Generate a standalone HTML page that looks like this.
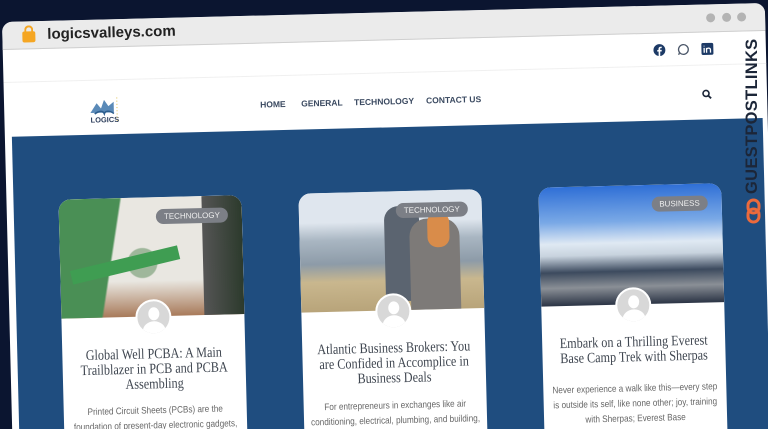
<!DOCTYPE html>
<html><head><meta charset="utf-8">
<style>
*{margin:0;padding:0;box-sizing:border-box}
html,body{width:768px;height:429px;overflow:hidden;background:#0b1530;font-family:"Liberation Sans",sans-serif}
.wrap{position:relative;width:768px;height:429px;overflow:hidden}
.win{position:absolute;left:2px;top:22px;width:763px;height:440px;transform-origin:0 0;transform:rotate(-1.43deg);background:#fff;border-radius:10px 10px 0 0;overflow:hidden}
.addr{position:absolute;left:0;top:0;width:100%;height:28px;background:#ebebeb;border-bottom:1px solid #cfcfcf}
.lock{position:absolute;left:20px;top:10px;width:13px;height:11px;background:#f5a623;border-radius:2px}
.lock:before{content:"";position:absolute;left:2px;top:-6px;width:5px;height:6px;border:2px solid #f5a623;border-bottom:none;border-radius:5px 5px 0 0}
.url{position:absolute;left:45px;top:5px;font-size:15px;font-weight:bold;color:#222}
.dot{position:absolute;top:9px;width:9px;height:9px;border-radius:50%;background:#b3b3b3}
.soc{position:absolute;top:38px;width:13px;height:13px}
.line{position:absolute;left:0;top:60px;width:100%;height:1px;background:#f0f0f0}
.nav{position:absolute;top:84px;font-size:8.5px;font-weight:bold;color:#3a4960}
.blue{position:absolute;left:7px;right:5px;top:115px;bottom:0;background:#1f4d7f}
.card{position:absolute;top:64px;width:183px;height:320px;background:#fff;border-radius:12px 12px 0 0;overflow:hidden}
.img{position:absolute;left:0;top:0;width:100%;height:119px}
.pill{position:absolute;top:12px;right:14px;background:#7c7f86;color:#eee;font-size:8px;padding:3px 8px;border-radius:8px}
.av{position:absolute;left:74px;top:102px;width:36px;height:36px;border-radius:50%;background:#d8d8d8;border:2px solid #fff;overflow:hidden}
.av:before{content:"";position:absolute;left:11px;top:6px;width:11px;height:13px;border-radius:50%;background:#fff}
.av:after{content:"";position:absolute;left:5px;top:20px;width:23px;height:20px;border-radius:50%;background:#fff}
.t{position:absolute;left:-10px;width:203px;top:150px;text-align:center;font-family:"Liberation Serif",serif;font-size:14.5px;line-height:15px;color:#3f4650;transform:scaleX(0.84);transform-origin:50% 0}
.e{position:absolute;left:-9px;width:201px;text-align:center;font-size:9.5px;line-height:15px;color:#666;transform:scaleX(0.86);transform-origin:50% 0}
.gp{position:absolute;left:742px;top:36px;height:160px;width:20px;writing-mode:vertical-rl;transform:rotate(180deg);font-size:16.5px;font-weight:bold;color:#1c2638;letter-spacing:0.3px;text-align:center;line-height:20px}
</style></head><body><div class="wrap">
<div class="win">
 <div class="addr"><div class="lock"></div><div class="url">logicsvalleys.com</div>
  <div class="dot" style="left:704px"></div><div class="dot" style="left:720px"></div><div class="dot" style="left:735px"></div></div>
 <svg class="soc" style="left:650px" viewBox="0 0 12 12"><circle cx="6" cy="6" r="5.5" fill="#1d3a66"/><path d="M6.7 11.5V7.3h1.3l.2-1.5H6.7v-.9c0-.4.1-.7.7-.7h.8V2.9H7.1c-1.1 0-1.9.7-1.9 1.9v1H4v1.5h1.2v4.2z" fill="#fff"/></svg>
 <svg class="soc" style="left:674px" viewBox="0 0 12 12"><circle cx="6" cy="6" r="4.5" fill="none" stroke="#4a5668" stroke-width="1.2"/><path d="M1.5 10.8l1-2.5" stroke="#4a5668" stroke-width="1.2"/></svg>
 <svg class="soc" style="left:698px" viewBox="0 0 12 12"><rect x="0.5" y="0.5" width="11" height="11" rx="1.5" fill="#1d3a66"/><path d="M3 5v4.5M3 3v.6M5.2 9.5V5M5.2 6.8c0-1.8 3.6-2.2 3.6 0v2.7" stroke="#fff" stroke-width="1.2" fill="none"/></svg>
 <div class="line"></div>
 <svg style="position:absolute;left:84px;top:74px" width="32" height="32" viewBox="0 0 30 30"><path d="M2 18l6-9 4 5 3-8 4 6 5-4v10z" fill="#5a8ab8"/><path d="M6 19c4-3 8-3 9 0c1-3 5-3 9 0" fill="none" stroke="#2e5f8e" stroke-width="1.5"/><text x="2" y="27" font-size="7" font-weight="bold" fill="#2e3f5c" font-family="Liberation Sans">LOGICS</text><path d="M27 4v22" stroke="#e3c96a" stroke-width="1" stroke-dasharray="1 2"/></svg>
 <div class="nav" style="left:256px">HOME</div>
 <div class="nav" style="left:297px">GENERAL</div>
 <div class="nav" style="left:350px">TECHNOLOGY</div>
 <div class="nav" style="left:422px">CONTACT US</div>
 <svg style="position:absolute;left:698px;top:85px" width="10" height="10" viewBox="0 0 10 10"><circle cx="4" cy="4" r="3" fill="none" stroke="#1c2638" stroke-width="1.6"/><path d="M6.2 6.2L9 9" stroke="#1c2638" stroke-width="1.8"/></svg>
 <div class="blue">
  <div class="card" style="left:45px">
   <div class="img" style="background:radial-gradient(circle at 45% 55%,#9fb79b 0 12%,transparent 13%),linear-gradient(100deg,#4a8f55 0 30%,transparent 31%),linear-gradient(180deg,#e9e7e1 0 70%,#a87a5a 100%);"><div style="position:absolute;left:10px;top:60px;width:110px;height:14px;background:#3f9d52;transform:rotate(-12deg)"></div><div style="position:absolute;right:0;top:0;width:40px;height:119px;background:linear-gradient(90deg,#555,#2c3a2c)"></div></div>
   <div class="pill">TECHNOLOGY</div><div class="av"></div>
   <div class="t">Global Well PCBA: A Main Trailblazer in PCB and PCBA Assembling</div>
   <div class="e" style="top:206px">Printed Circuit Sheets (PCBs) are the foundation of present-day electronic gadgets,</div>
  </div>
  <div class="card" style="left:285px">
   <div class="img" style="background:linear-gradient(180deg,#dfe6ee 0 25%,#a9b6c2 40%,#8d9ba8 60%,#c9b78e 75%,#b8a47a 100%)"><div style="position:absolute;left:85px;top:15px;width:35px;height:95px;background:#5b6470;border-radius:14px 14px 0 0"></div><div style="position:absolute;left:110px;top:28px;width:50px;height:91px;background:#7d7a78;border-radius:18px 18px 0 0"></div><div style="position:absolute;left:128px;top:22px;width:22px;height:35px;background:#d98c4a;border-radius:10px"></div></div>
   <div class="pill">TECHNOLOGY</div><div class="av"></div>
   <div class="t">Atlantic Business Brokers: You are Confided in Accomplice in Business Deals</div>
   <div class="e" style="top:207px">For entrepreneurs in exchanges like air conditioning, electrical, plumbing, and building, expressing possession can be an</div>
  </div>
  <div class="card" style="left:525px">
   <div class="img" style="background:linear-gradient(180deg,#2f6fd6 0%,#7aa9e6 30%,#dfe9f3 48%,#c8d3de 58%,#3c4a5e 72%,#8a8f96 85%,#2b3445 100%)"></div>
   <div class="pill">BUSINESS</div><div class="av"></div>
   <div class="t">Embark on a Thrilling Everest Base Camp Trek with Sherpas</div>
   <div class="e" style="top:196px">Never experience a walk like this—every step is outside its self, like none other; joy, training with Sherpas; Everest Base</div>
  </div>
 </div>
</div>
<div class="gp">GUESTPOSTLINKS</div>
<svg style="position:absolute;left:745px;top:198px" width="18" height="26" viewBox="0 0 18 26"><rect x="3" y="2" width="11" height="13" rx="5.5" fill="none" stroke="#ec6a3c" stroke-width="3"/><rect x="3" y="11" width="11" height="13" rx="5.5" fill="none" stroke="#ec6a3c" stroke-width="3"/></svg>
</div></body></html>
